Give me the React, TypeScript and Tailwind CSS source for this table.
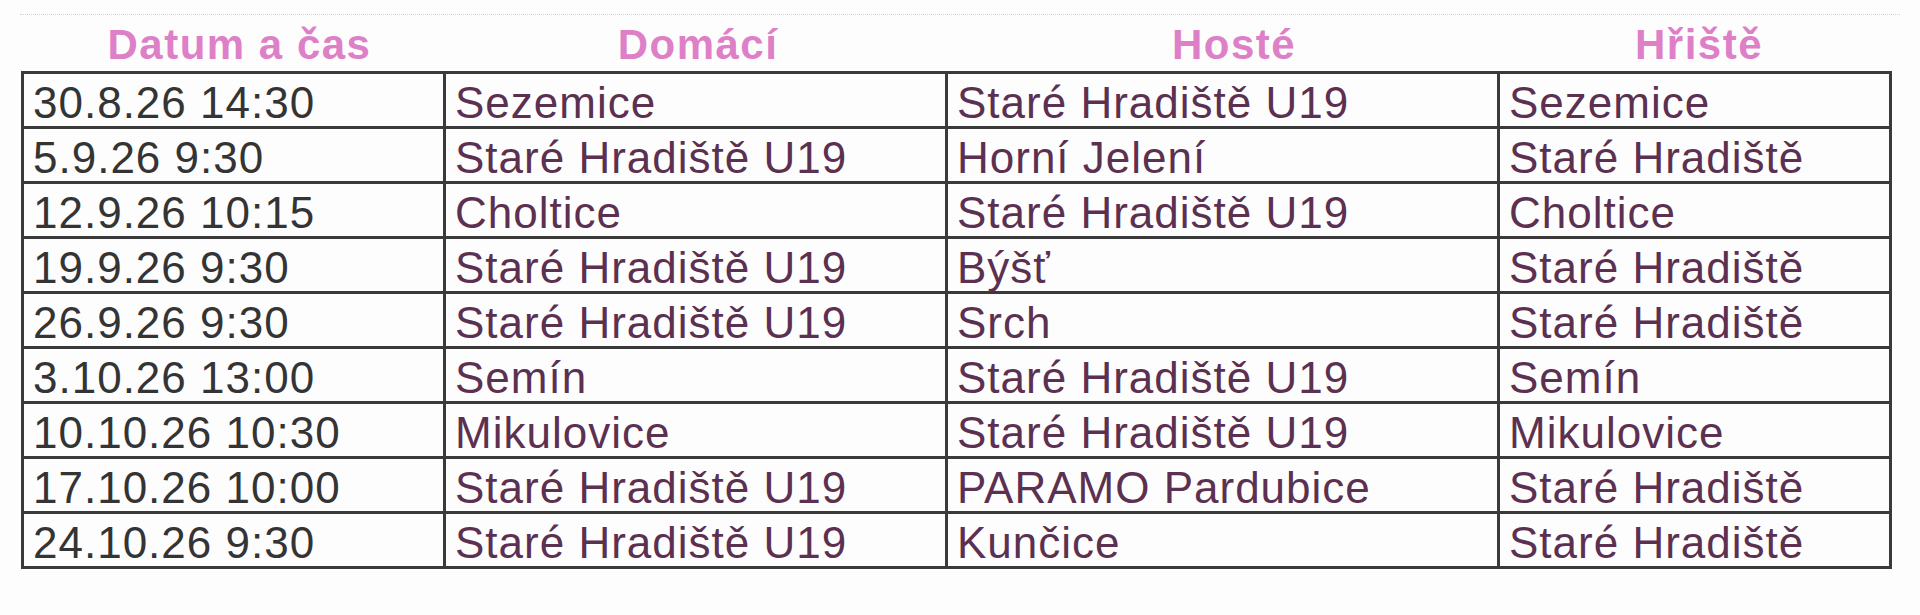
import React from "react";

const rows: [string, string, string, string][] = [
  ["30.8.26 14:30", "Sezemice", "Staré Hradiště U19", "Sezemice"],
  ["5.9.26 9:30", "Staré Hradiště U19", "Horní Jelení", "Staré Hradiště"],
  ["12.9.26 10:15", "Choltice", "Staré Hradiště U19", "Choltice"],
  ["19.9.26 9:30", "Staré Hradiště U19", "Býšť", "Staré Hradiště"],
  ["26.9.26 9:30", "Staré Hradiště U19", "Srch", "Staré Hradiště"],
  ["3.10.26 13:00", "Semín", "Staré Hradiště U19", "Semín"],
  ["10.10.26 10:30", "Mikulovice", "Staré Hradiště U19", "Mikulovice"],
  ["17.10.26 10:00", "Staré Hradiště U19", "PARAMO Pardubice", "Staré Hradiště"],
  ["24.10.26 9:30", "Staré Hradiště U19", "Kunčice", "Staré Hradiště"],
];

const headers: [string, string][] = [
  ["Datum a čas", "pl-[12px]"],
  ["Domácí", "pl-[2px]"],
  ["Hosté", "pl-[20px]"],
  ["Hřiště", "pl-[6px]"],
];

export default function App() {
  return (
    <div className="w-[1920px] h-[615px] bg-[#fdfdfd] overflow-hidden font-['Liberation_Sans',Arial,sans-serif]">
      <div className="pt-[14px]">
        <div className="mx-[20px] h-0 border-t border-dotted border-[#d4d4d4]" />
      </div>
      <div className="ml-[21px] w-[1871px] grid grid-cols-[425px_502px_552px_392px] h-[56px]">
        {headers.map(([h, pad]) => (
          <div
            key={h}
            className={
              "flex items-center justify-center pt-[4px] text-[42px] font-bold leading-none tracking-[1.5px] text-[#de80c8] " +
              pad
            }
          >
            {h}
          </div>
        ))}
      </div>
      <div className="ml-[21px] w-[1871px] border-l-[3px] border-t-[3px] border-[#3a3a3a] grid grid-cols-[422px_502px_552px_392px]">
        {rows.map((r, i) =>
          r.map((c, j) => (
            <div
              key={i + "-" + j}
              className={
                "h-[55px] border-r-[3px] border-b-[3px] border-[#3a3a3a] flex items-center pt-[6px] pl-[9px] text-[44px] leading-none tracking-[1px] whitespace-nowrap " +
                (j === 0 ? "text-[#343434]" : "text-[#5c3050]")
              }
            >
              {c}
            </div>
          ))
        )}
      </div>
    </div>
  );
}
